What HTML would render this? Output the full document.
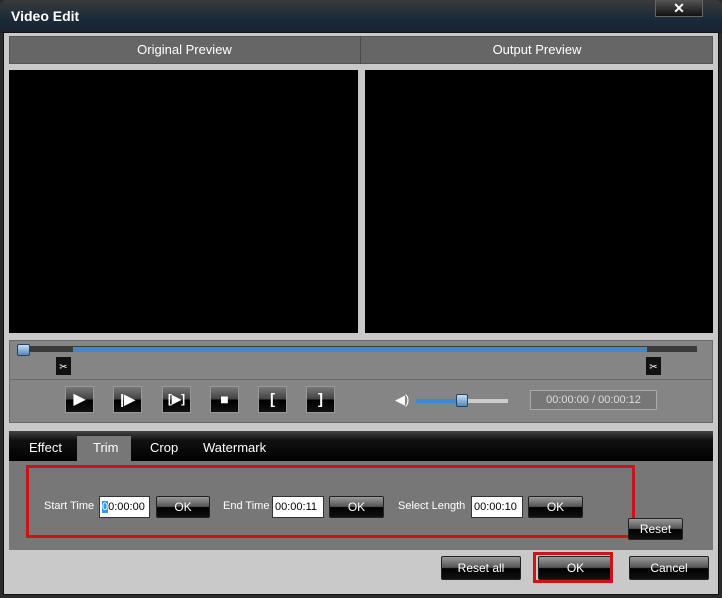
<!DOCTYPE html><html><head><style>
*{margin:0;padding:0;box-sizing:border-box}
body{width:722px;height:598px;background:#2a2a2a;font-family:"Liberation Sans",sans-serif;position:relative;overflow:hidden}
.a{position:absolute}
.win{left:3px;top:32px;width:716px;height:563px;background:#c9c9c9;border:1px solid #111}
.title{left:0;top:0;width:722px;height:33px;background:linear-gradient(#3a3a3a,#1a2a3a 60%,#1a2230);border-radius:6px 6px 0 0}
.btn{background:linear-gradient(#9a9a9a,#555 48%,#000 52%,#111);border:1px solid #222;border-radius:2px;color:#fff;font-size:12px;text-align:center}
.cb{background:linear-gradient(#777,#444 48%,#000 52%,#111);border:1px solid #999;width:29px;height:27px;top:386px}
.inp{background:#fff;border:1px solid #333;font-size:11px;height:22px;top:496px;padding:4px 2px;color:#000}
.lab{color:#fff;font-size:11px;top:500px}
</style></head><body>
<div class="a title"></div>
<div class="a" style="left:11px;top:8px;color:#fff;font-weight:bold;font-size:14px">Video Edit</div>
<div class="a" style="left:655px;top:0;width:48px;height:17px;background:linear-gradient(#555,#111);border:1px solid #666;border-top:none;color:#fff;font-weight:bold;font-size:14px;text-align:center;line-height:17px">✕</div>
<div class="a win"></div>
<div class="a" style="left:9px;top:36px;width:704px;height:28px;background:#666;border:1px solid #555"></div>
<div class="a" style="left:360px;top:36px;width:1px;height:28px;background:#4a4a4a"></div>
<div class="a" style="left:9px;top:42px;width:351px;text-align:center;color:#fff;font-size:13px">Original Preview</div>
<div class="a" style="left:361px;top:42px;width:352px;text-align:center;color:#fff;font-size:13px">Output Preview</div>
<div class="a" style="left:9px;top:70px;width:349px;height:263px;background:#000"></div>
<div class="a" style="left:365px;top:70px;width:348px;height:263px;background:#000"></div>
<div class="a" style="left:9px;top:340px;width:704px;height:83px;background:#858585;border:1px solid #6a6a6a"></div>
<div class="a" style="left:9px;top:379px;width:704px;height:1px;background:#6a6a6a"></div>
<div class="a" style="left:18px;top:346px;width:679px;height:6px;background:#3a3a3a"></div>
<div class="a" style="left:73px;top:347px;width:574px;height:5px;background:#3a8ad0"></div>
<div class="a" style="left:17px;top:344px;width:13px;height:12px;background:linear-gradient(#cde,#58b);border:1px solid #246;border-radius:2px"></div>
<div class="a" style="left:56px;top:357px;width:15px;height:18px;background:#111;color:#fff;font-size:10px;text-align:center;line-height:22px">✂</div>
<div class="a" style="left:646px;top:357px;width:15px;height:18px;background:#111;color:#fff;font-size:10px;text-align:center;line-height:22px">✂</div>
<div class="a cb" style="left:65px;color:#fff;font-size:16px;text-align:center;line-height:25px">▶</div>
<div class="a cb" style="left:113px;color:#fff;font-size:14px;text-align:center;line-height:25px;font-weight:bold">|▶</div>
<div class="a cb" style="left:162px;color:#fff;font-size:12px;text-align:center;line-height:25px;font-weight:bold">[▶]</div>
<div class="a cb" style="left:210px;color:#fff;font-size:14px;text-align:center;line-height:25px">■</div>
<div class="a cb" style="left:258px;color:#fff;font-size:15px;text-align:center;line-height:25px;font-weight:bold">[</div>
<div class="a cb" style="left:306px;color:#fff;font-size:15px;text-align:center;line-height:25px;font-weight:bold">]</div>
<div class="a" style="left:395px;top:392px;color:#fff;font-size:13px">◀)</div>
<div class="a" style="left:416px;top:399px;width:92px;height:4px;background:#ccc"></div>
<div class="a" style="left:416px;top:399px;width:46px;height:4px;background:#3a8ad0"></div>
<div class="a" style="left:456px;top:394px;width:12px;height:13px;background:linear-gradient(#cde,#58b);border:1px solid #246;border-radius:2px"></div>
<div class="a" style="left:530px;top:390px;width:127px;height:20px;background:#777;border:1px solid #aaa;color:#ddd;font-size:11px;text-align:center;line-height:18px">00:00:00 / 00:00:12</div>
<div class="a" style="left:9px;top:431px;width:704px;height:30px;background:linear-gradient(#444,#111 30%,#000)"></div>
<div class="a" style="left:77px;top:436px;width:54px;height:25px;background:#777"></div>
<div class="a" style="left:29px;top:440px;color:#fff;font-size:13px">Effect</div>
<div class="a" style="left:93px;top:440px;color:#fff;font-size:13px">Trim</div>
<div class="a" style="left:150px;top:440px;color:#fff;font-size:13px">Crop</div>
<div class="a" style="left:203px;top:440px;color:#fff;font-size:13px">Watermark</div>
<div class="a" style="left:9px;top:461px;width:704px;height:89px;background:#777"></div>
<div class="a" style="left:26px;top:465px;width:609px;height:73px;border:3px solid #c8141a"></div>
<div class="a lab" style="left:44px">Start Time</div>
<div class="a inp" style="left:99px;width:51px"><span style="background:#39f;color:#fff">0</span>0:00:00</div>
<div class="a btn" style="left:156px;top:496px;width:54px;height:22px;line-height:21px">OK</div>
<div class="a lab" style="left:223px">End Time</div>
<div class="a inp" style="left:272px;width:52px">00:00:11</div>
<div class="a btn" style="left:329px;top:496px;width:55px;height:22px;line-height:21px">OK</div>
<div class="a lab" style="left:398px">Select Length</div>
<div class="a inp" style="left:471px;width:52px">00:00:10</div>
<div class="a btn" style="left:528px;top:496px;width:55px;height:22px;line-height:21px">OK</div>
<div class="a btn" style="left:628px;top:518px;width:55px;height:22px;line-height:21px">Reset</div>
<div class="a btn" style="left:441px;top:556px;width:80px;height:24px;line-height:23px">Reset all</div>
<div class="a btn" style="left:538px;top:556px;width:75px;height:24px;line-height:23px">OK</div>
<div class="a" style="left:533px;top:552px;width:80px;height:31px;border:3px solid #c8141a"></div>
<div class="a btn" style="left:629px;top:556px;width:80px;height:24px;line-height:23px">Cancel</div>
</body></html>
